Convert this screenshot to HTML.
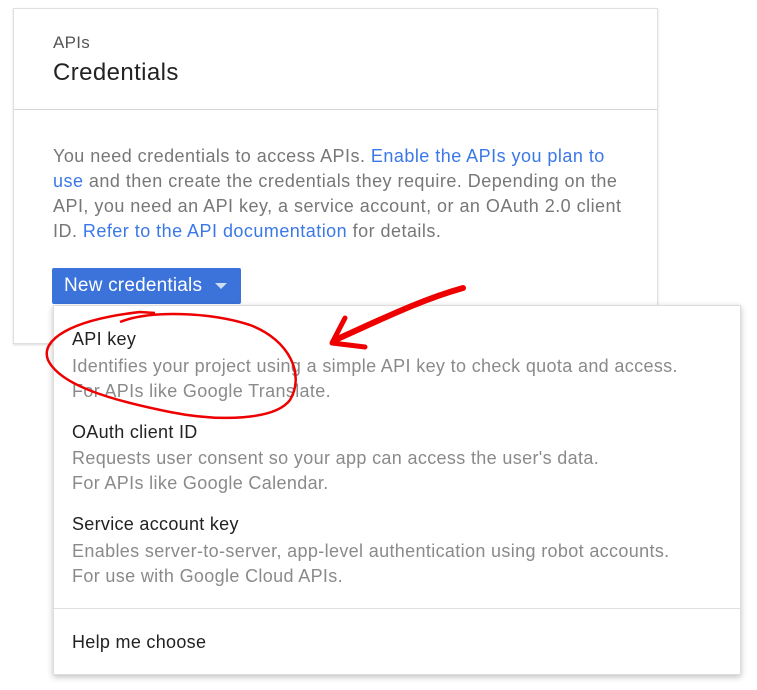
<!DOCTYPE html>
<html><head><style>
body{margin:0;width:757px;height:690px;background:#fff;font-family:"Liberation Sans",sans-serif;position:relative;overflow:hidden}
.card{position:absolute;left:13px;top:8px;width:643px;height:334px;border:1px solid #e0e0e0;box-shadow:0 1px 2px rgba(0,0,0,.15);background:#fff}
.t{position:absolute;white-space:nowrap}
a{color:#3b78e7;text-decoration:none}
.menu{position:absolute;left:53px;top:305px;width:686px;height:368px;background:#fff;border:1px solid #ddd;box-shadow:0 2px 6px rgba(0,0,0,.25)}
.h{font-size:18px;color:#222;letter-spacing:0.3px}
.d{font-size:18px;color:#8a8a8a;letter-spacing:0.35px}
</style></head><body>
<div class="card">
<div class="t" style="left:39px;top:24px;font-size:17px;color:#555;letter-spacing:0.3px">APIs</div>
<div class="t" style="left:39px;top:50px;font-size:24px;color:#222;letter-spacing:0.4px">Credentials</div>
<div style="position:absolute;left:0;right:0;top:100px;border-top:1px solid #d6d6d6"></div>
<div class="t" style="left:39px;top:135px;font-size:18px;line-height:25px;color:#777;letter-spacing:0.47px">You need credentials to access APIs. <a>Enable the APIs you plan to</a><br><a>use</a> and then create the credentials they require. Depending on the<br>API, you need an API key, a service account, or an OAuth 2.0 client<br>ID. <a>Refer to the API documentation</a> for details.</div>
</div>
<div style="position:absolute;left:52px;top:268px;width:189px;height:36px;background:#3b73db;border-radius:2px;color:#fff;font-size:19px;line-height:36px;letter-spacing:0.2px">
<span style="margin-left:12px">New credentials</span>
<span style="position:absolute;left:163px;top:15px;border-left:6px solid transparent;border-right:6px solid transparent;border-top:6px solid #cfdcf5"></span></div>
<div class="menu">
<div class="t h" style="left:18px;top:23px">API key</div>
<div class="t d" style="left:18px;top:48px;line-height:25px">Identifies your project using a simple API key to check quota and access.<br>For APIs like Google Translate.</div>
<div class="t h" style="left:18px;top:116px">OAuth client ID</div>
<div class="t d" style="left:18px;top:140px;line-height:25px">Requests user consent so your app can access the user's data.<br>For APIs like Google Calendar.</div>
<div class="t h" style="left:18px;top:208px">Service account key</div>
<div class="t d" style="left:18px;top:233px;line-height:25px">Enables server-to-server, app-level authentication using robot accounts.<br>For use with Google Cloud APIs.</div>
<div style="position:absolute;left:0;right:0;top:302px;border-top:1px solid #e0e0e0"></div>
<div class="t h" style="left:18px;top:326px">Help me choose</div>
</div>
<svg style="position:absolute;left:0;top:0" width="757" height="690">
<path d="M120 322 C150 310 210 312 250 325 C290 340 305 375 290 400 C275 420 220 422 170 412 C110 400 60 385 48 360 C40 340 70 320 140 312 L155 313" fill="none" stroke="#e00" stroke-width="2.5"/>
<path d="M463 288 C420 300 380 320 335 340" fill="none" stroke="#e00" stroke-width="6" stroke-linecap="round"/>
<path d="M345 318 L332 343 L365 347" fill="none" stroke="#e00" stroke-width="5" stroke-linecap="round" stroke-linejoin="round"/>
</svg>
</body></html>
